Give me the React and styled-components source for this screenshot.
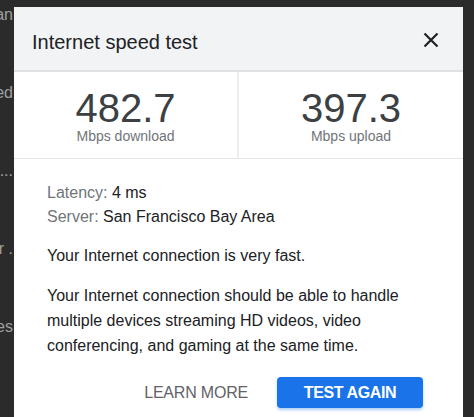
import React from 'react';
import styled, { createGlobalStyle } from 'styled-components';

const Global = createGlobalStyle`
  html, body {
    margin: 0;
    padding: 0;
    background: #2b2b2b;
  }
  body {
    font-family: "Liberation Sans", Arial, sans-serif;
  }
`;

const Page = styled.div`
  display: flex;
  align-items: flex-start;
  height: 417px;
  overflow: hidden;
  background: #2b2b2b;
  padding-top: 7px;
  box-sizing: border-box;
`;

const Backdrop = styled.div`
  width: 13px;
  margin-right: 1px;
  flex: none;
  display: flex;
  flex-direction: column;
  overflow: hidden;
  margin-top: -1px;
`;

const BackdropLine = styled.div`
  height: 78px;
  display: flex;
  justify-content: flex-end;
  line-height: 18px;
  font-size: 16px;
  color: #a0a0a0;
  white-space: nowrap;
`;

const Dialog = styled.div`
  width: 449px;
  flex: none;
  background: #fff;
  display: flex;
  flex-direction: column;
  min-height: 430px;
`;

const Header = styled.div`
  height: 63px;
  display: flex;
  align-items: center;
  justify-content: space-between;
  padding: 0 22px 0 18px;
  background: #f1f3f4;
  border-bottom: 2px solid #dfe1e4;
`;

const Title = styled.h1`
  margin: 0;
  font-size: 20px;
  font-weight: 400;
  color: #202124;
  padding-top: 8px;
`;

const Close = styled.button`
  width: 20px;
  height: 20px;
  padding: 0;
  border: 0;
  background: transparent;
  display: flex;
  align-items: center;
  justify-content: center;
  cursor: pointer;
  margin-top: 2px;
`;

const Stats = styled.div`
  display: grid;
  grid-template-columns: 223px 1fr;
  border-bottom: 1px solid #e3e5e8;
`;

const Stat = styled.div`
  display: flex;
  flex-direction: column;
  align-items: center;
  padding: 16px 0 14px;
  border-left: ${p => (p.divided ? '2px solid #eceef0' : 'none')};
`;

const Speed = styled.div`
  font-size: 40px;
  line-height: 40px;
  color: #3c4043;
`;

const Unit = styled.div`
  font-size: 14px;
  line-height: 16px;
  color: #70757a;
`;

const Body = styled.div`
  padding: 22px 40px 0 33px;
  font-size: 16px;
  color: #202124;
`;

const Info = styled.div`
  line-height: 24px;
`;

const Label = styled.span`
  color: #70757a;
`;

const Para = styled.p`
  margin: ${p => p.gap}px 0 0;
  line-height: 25px;
`;

const Actions = styled.div`
  display: flex;
  justify-content: flex-end;
  align-items: center;
  gap: 13px;
  margin-top: 19px;
`;

const Button = styled.button`
  font-family: "Liberation Sans", Arial, sans-serif;
  font-size: 16px;
  height: 31px;
  border-radius: 4px;
  border: 0;
  cursor: pointer;
  letter-spacing: ${p => (p.primary ? '-0.4px' : '-0.2px')};
  padding: ${p => (p.primary ? '0 26px' : '0 16px')};
  font-weight: ${p => (p.primary ? 700 : 400)};
  background: ${p => (p.primary ? '#1a73e8' : 'transparent')};
  color: ${p => (p.primary ? '#fff' : '#5f6368')};
  box-shadow: ${p => (p.primary ? '0 2px 3px rgba(26, 115, 232, 0.35)' : 'none')};
  width: ${p => (p.primary ? '146px' : 'auto')};
`;

const backdrop = ['Scan', 'Speed', '...', 'Our .', 'Devices'];

export default function App() {
  return (
    <Page>
      <Global />
      <Backdrop>
        {backdrop.map(t => (
          <BackdropLine key={t}>{t}</BackdropLine>
        ))}
      </Backdrop>
      <Dialog>
        <Header>
          <Title>Internet speed test</Title>
          <Close aria-label="Close">
            <svg width="16" height="16" viewBox="0 0 16 16">
              <path d="M1.5 1.5 L14.5 14.5 M14.5 1.5 L1.5 14.5" stroke="#202124" strokeWidth="2.2" />
            </svg>
          </Close>
        </Header>
        <Stats>
          <Stat>
            <Speed>482.7</Speed>
            <Unit>Mbps download</Unit>
          </Stat>
          <Stat divided>
            <Speed>397.3</Speed>
            <Unit>Mbps upload</Unit>
          </Stat>
        </Stats>
        <Body>
          <Info>
            <div>
              <Label>Latency:</Label> 4 ms
            </div>
            <div>
              <Label>Server:</Label> San Francisco Bay Area
            </div>
          </Info>
          <Para gap={14}>Your Internet connection is very fast.</Para>
          <Para gap={15}>
            Your Internet connection should be able to handle multiple devices streaming HD videos, video
            conferencing, and gaming at the same time.
          </Para>
          <Actions>
            <Button>LEARN MORE</Button>
            <Button primary>TEST AGAIN</Button>
          </Actions>
        </Body>
      </Dialog>
    </Page>
  );
}
